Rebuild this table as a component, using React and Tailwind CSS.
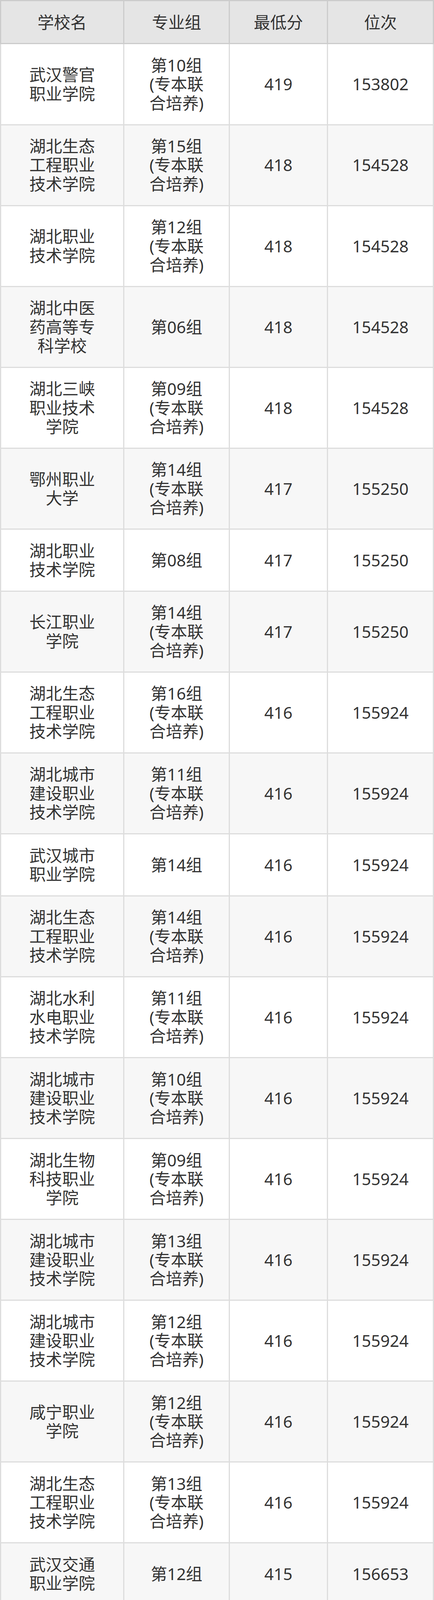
const rows = [
  [["武汉警官", "职业学院"], ["第10组", "(专本联", "合培养)"], "419", "153802"],
  [["湖北生态", "工程职业", "技术学院"], ["第15组", "(专本联", "合培养)"], "418", "154528"],
  [["湖北职业", "技术学院"], ["第12组", "(专本联", "合培养)"], "418", "154528"],
  [["湖北中医", "药高等专", "科学校"], ["第06组"], "418", "154528"],
  [["湖北三峡", "职业技术", "学院"], ["第09组", "(专本联", "合培养)"], "418", "154528"],
  [["鄂州职业", "大学"], ["第14组", "(专本联", "合培养)"], "417", "155250"],
  [["湖北职业", "技术学院"], ["第08组"], "417", "155250"],
  [["长江职业", "学院"], ["第14组", "(专本联", "合培养)"], "417", "155250"],
  [["湖北生态", "工程职业", "技术学院"], ["第16组", "(专本联", "合培养)"], "416", "155924"],
  [["湖北城市", "建设职业", "技术学院"], ["第11组", "(专本联", "合培养)"], "416", "155924"],
  [["武汉城市", "职业学院"], ["第14组"], "416", "155924"],
  [["湖北生态", "工程职业", "技术学院"], ["第14组", "(专本联", "合培养)"], "416", "155924"],
  [["湖北水利", "水电职业", "技术学院"], ["第11组", "(专本联", "合培养)"], "416", "155924"],
  [["湖北城市", "建设职业", "技术学院"], ["第10组", "(专本联", "合培养)"], "416", "155924"],
  [["湖北生物", "科技职业", "学院"], ["第09组", "(专本联", "合培养)"], "416", "155924"],
  [["湖北城市", "建设职业", "技术学院"], ["第13组", "(专本联", "合培养)"], "416", "155924"],
  [["湖北城市", "建设职业", "技术学院"], ["第12组", "(专本联", "合培养)"], "416", "155924"],
  [["咸宁职业", "学院"], ["第12组", "(专本联", "合培养)"], "416", "155924"],
  [["湖北生态", "工程职业", "技术学院"], ["第13组", "(专本联", "合培养)"], "416", "155924"],
  [["武汉交通", "职业学院"], ["第12组"], "415", "156653"],
];

function Lines({ lines }) {
  return (
    <div className="flex flex-col items-center">
      {lines.map((l, i) => (
        <span
          key={i}
          className="flex h-[48.3px] items-center justify-center whitespace-nowrap"
        >
          {l}
        </span>
      ))}
    </div>
  );
}

export default function App() {
  const headCell =
    "flex items-center justify-center py-[29.6px] border-r-[3px] border-b-[3px] border-t-[3px] border-[#cccccc] bg-[#e5e5e5]";
  return (
    <div
      className="w-[1110px] text-[42px] leading-[48.3px] text-[#333333]"
      style={{ fontFamily: '"Noto Sans", "Noto Sans CJK SC", sans-serif' }}
    >
      <div className="grid grid-cols-[318px_270px_251px_271px]">
        <div className={headCell + " border-l-[3px]"}>
          <Lines lines={["学校名"]} />
        </div>
        <div className={headCell}>
          <Lines lines={["专业组"]} />
        </div>
        <div className={headCell}>
          <Lines lines={["最低分"]} />
        </div>
        <div className={headCell}>
          <Lines lines={["位次"]} />
        </div>
        {rows.map((r, i) => {
          const bg = i % 2 === 0 ? "bg-white" : "bg-[#f7f7f7]";
          const cell =
            "flex items-center justify-center py-[29.6px] border-r-[3px] border-b-[3px] border-[#dddddd] " +
            bg;
          return [
            <div key={i + "a"} className={cell + " border-l-[3px]"}>
              <Lines lines={r[0]} />
            </div>,
            <div key={i + "b"} className={cell}>
              <Lines lines={r[1]} />
            </div>,
            <div key={i + "c"} className={cell}>
              <Lines lines={[r[2]]} />
            </div>,
            <div key={i + "d"} className={cell}>
              <Lines lines={[r[3]]} />
            </div>,
          ];
        })}
      </div>
    </div>
  );
}
